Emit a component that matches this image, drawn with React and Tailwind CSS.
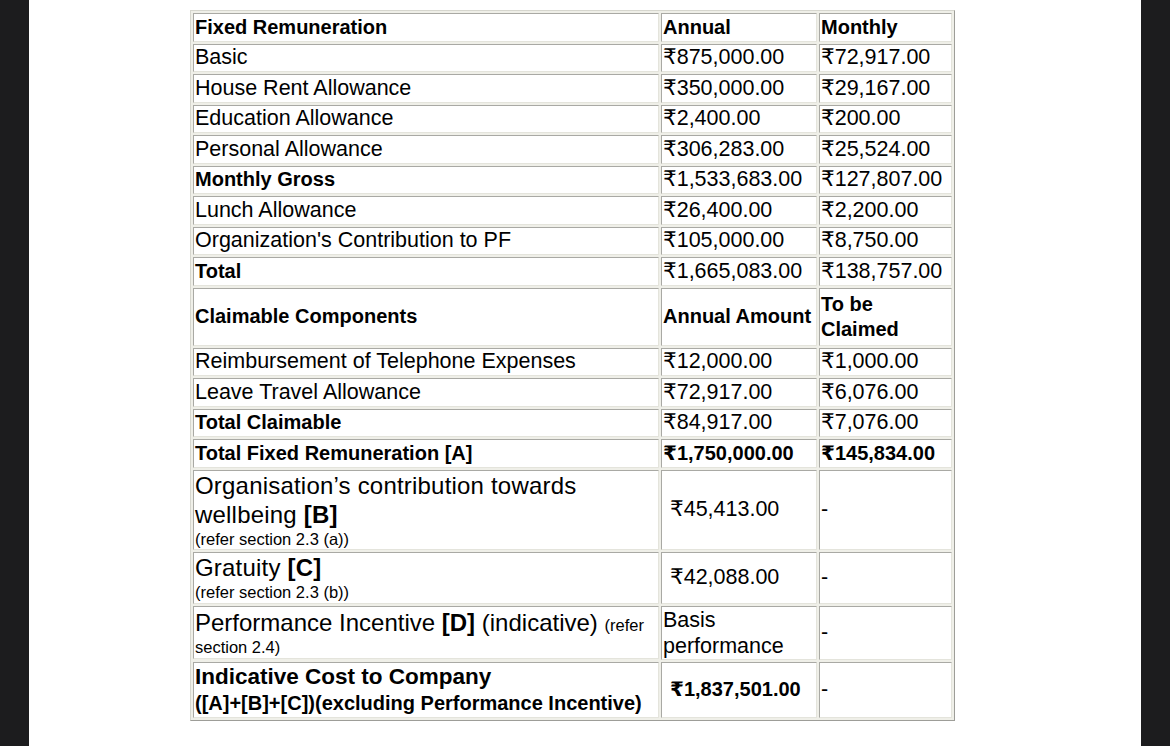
import React from 'react';

// One table cell: white box with the old "inset" border look
const Cell = ({ children, pad = 'pl-[1px]', className = '' }) => (
  <div
    className={`flex items-center bg-white border border-t-[#a9a9a4] border-l-[#a9a9a4] border-b-[#e4e4dc] border-r-[#e4e4dc] ${pad} ${className}`}
  >
    {children}
  </div>
);

const fixedRows = [
  { label: 'Fixed Remuneration', annual: 'Annual', monthly: 'Monthly', bold: 'all' },
  { label: 'Basic', annual: '₹875,000.00', monthly: '₹72,917.00' },
  { label: 'House Rent Allowance', annual: '₹350,000.00', monthly: '₹29,167.00' },
  { label: 'Education Allowance', annual: '₹2,400.00', monthly: '₹200.00' },
  { label: 'Personal Allowance', annual: '₹306,283.00', monthly: '₹25,524.00' },
  { label: 'Monthly Gross', annual: '₹1,533,683.00', monthly: '₹127,807.00', bold: 'label' },
  { label: 'Lunch Allowance', annual: '₹26,400.00', monthly: '₹2,200.00' },
  { label: "Organization's Contribution to PF", annual: '₹105,000.00', monthly: '₹8,750.00' },
  { label: 'Total', annual: '₹1,665,083.00', monthly: '₹138,757.00', bold: 'label' },
];

const claimRows = [
  { label: 'Reimbursement of Telephone Expenses', annual: '₹12,000.00', monthly: '₹1,000.00' },
  { label: 'Leave Travel Allowance', annual: '₹72,917.00', monthly: '₹6,076.00' },
  { label: 'Total Claimable', annual: '₹84,917.00', monthly: '₹7,076.00', bold: 'label' },
  { label: 'Total Fixed Remuneration [A]', annual: '₹1,750,000.00', monthly: '₹145,834.00', bold: 'all' },
];

// bold cells in the source are drawn a touch smaller than the regular ones
const bold = 'font-bold text-[20px]';

const SimpleRow = ({ row }) => {
  const labelBold = row.bold ? bold : '';
  const valueBold = row.bold === 'all' ? bold : '';
  return (
    <>
      <Cell className={`h-[28.5px] ${labelBold}`}>{row.label}</Cell>
      <Cell className={`h-[28.5px] ${valueBold}`}>{row.annual}</Cell>
      <Cell className={`h-[28.5px] ${valueBold}`}>{row.monthly}</Cell>
    </>
  );
};

export default function App() {
  return (
    <div className="flex h-screen w-full bg-white text-black font-['Liberation_Sans',Arial,'DejaVu_Sans',sans-serif] text-[21.5px] leading-[25px]">
      <div className="w-[29px] shrink-0 bg-[#1c1c1e]" />

      <main className="flex-1 pl-[161px] pt-[10px]">
        <div className="grid w-max grid-cols-[466px_156px_133px] gap-[2px] p-[2px] bg-[#efefe8] border border-t-[#d6d6ce] border-l-[#d6d6ce] border-b-[#9d9d98] border-r-[#9d9d98]">
          {fixedRows.map((row) => (
            <SimpleRow key={row.label} row={row} />
          ))}

          {/* Claimable header */}
          <Cell className={`h-[58px] ${bold}`}>Claimable Components</Cell>
          <Cell className={bold}>Annual Amount</Cell>
          <Cell className={bold}>
            <div>
              <div>To be</div>
              <div>Claimed</div>
            </div>
          </Cell>

          {claimRows.map((row) => (
            <SimpleRow key={row.label} row={row} />
          ))}

          {/* Wellbeing */}
          <Cell className="h-[80px]">
            <div className="text-[24px] leading-[29px] tracking-[0.2px]">
              <div>Organisation’s contribution towards</div>
              <div>
                wellbeing <b>[B]</b>
              </div>
              <div className="text-[16.5px] leading-[20px] tracking-normal">(refer section 2.3 (a))</div>
            </div>
          </Cell>
          <Cell pad="pl-[8px]">₹45,413.00</Cell>
          <Cell>-</Cell>

          {/* Gratuity */}
          <Cell className="h-[52px]">
            <div>
              <div className="text-[24px] leading-[29px] tracking-[0.2px]">
                Gratuity <b>[C]</b>
              </div>
              <div className="text-[16.5px] leading-[20px]">(refer section 2.3 (b))</div>
            </div>
          </Cell>
          <Cell pad="pl-[8px]">₹42,088.00</Cell>
          <Cell>-</Cell>

          {/* Performance incentive */}
          <Cell className="h-[53px]">
            <div>
              <div className="text-[24px] leading-[29px]">
                Performance Incentive <b>[D]</b> (indicative){' '}
                <span className="text-[16.5px] leading-none">(refer</span>
              </div>
              <div className="text-[16.5px] leading-[20px]">section 2.4)</div>
            </div>
          </Cell>
          <Cell className="leading-[26px]">Basis performance</Cell>
          <Cell>-</Cell>

          {/* Cost to company */}
          <Cell className={`h-[56px] ${bold}`}>
            <div>
              <div className="text-[22.5px] leading-[28px]">Indicative Cost to Company</div>
              <div>([A]+[B]+[C])(excluding Performance Incentive)</div>
            </div>
          </Cell>
          <Cell pad="pl-[8px]" className={bold}>
            ₹1,837,501.00
          </Cell>
          <Cell>-</Cell>
        </div>
      </main>

      <div className="w-[29px] shrink-0 bg-[#1c1c1e]" />
    </div>
  );
}
